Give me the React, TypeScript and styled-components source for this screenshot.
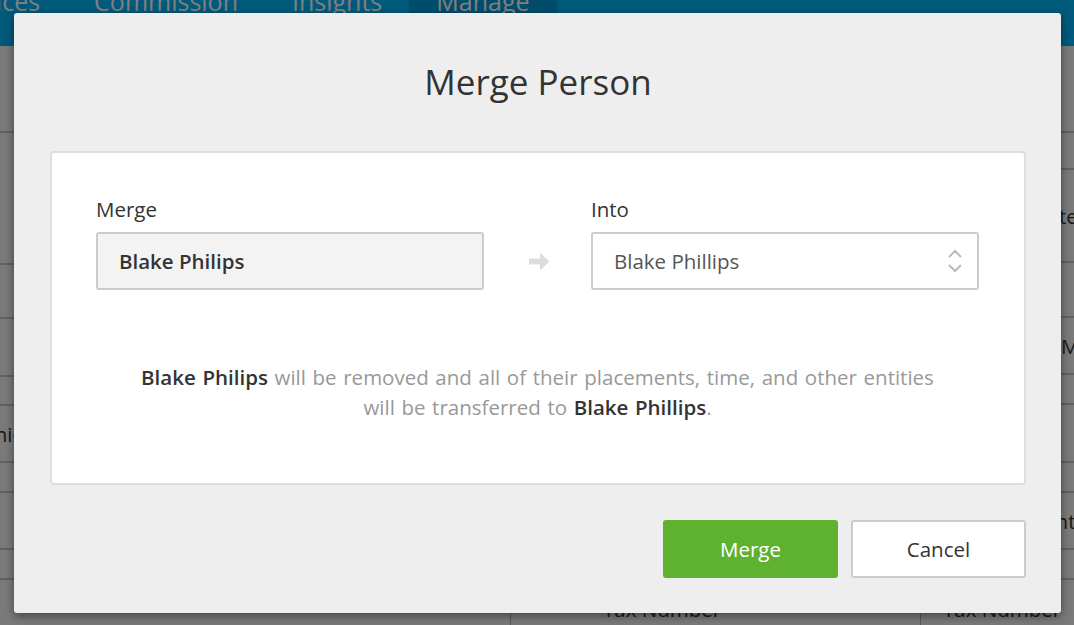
import * as React from 'react';
import styled, { createGlobalStyle } from 'styled-components';

const GlobalStyle = createGlobalStyle`
    html, body {
        margin: 0;
        padding: 0;
        width: 100%;
        height: 100%;
        overflow: hidden;
        font-family: "Open Sans", "Noto Sans", "Liberation Sans", sans-serif;
    }
`;

const Page = styled.div`
    width: 1074px;
    height: 625px;
    position: relative;
    overflow: hidden;
    background: #e8e8e8;
`;

const NavBar = styled.div`
    height: 46px;
    background: #00b4f6;
    display: flex;
    overflow: hidden;
`;

const NavItem = styled.div<{ active?: boolean; first?: boolean }>`
    padding: 0 27px;
    margin-left: ${(p) => (p.first ? '-81px' : '0')};
    background: ${(p) => (p.active ? '#009ad6' : 'transparent')};
    color: #ffffff;
    font-size: 25px;
    line-height: 20px;
    margin-top: -9px;
    height: 56px;
    white-space: nowrap;
`;

const TableGrid = styled.div`
    display: grid;
    grid-template-columns: 510px 410px 1fr;
`;

const Column = styled.div<{ divider?: boolean }>`
    display: flex;
    flex-direction: column;
    border-left: ${(p) => (p.divider ? '1px solid #b0b0b0' : 'none')};
`;

const Cell = styled.div<{ h: number }>`
    height: ${(p) => p.h}px;
    box-sizing: border-box;
    border-bottom: 2px solid #c2c2c2;
    background: #f4f4f4;
    color: #333;
    font-size: 20.5px;
    display: flex;
    align-items: center;
    white-space: nowrap;
    overflow: hidden;
`;

const CellText = styled.span<{ indent?: number }>`
    margin-left: ${(p) => p.indent ?? 22}px;
`;

const Overlay = styled.div`
    position: absolute;
    inset: 0;
    background: rgba(0, 0, 0, 0.5);
`;

const Modal = styled.div`
    position: absolute;
    left: 14px;
    top: 13px;
    width: 1047px;
    height: 600px;
    box-sizing: border-box;
    background: #eeeeee;
    border-radius: 3px;
    box-shadow: 0 3px 10px rgba(0, 0, 0, 0.45);
    padding: 0 35px 35px 36px;
    display: flex;
    flex-direction: column;
`;

const Title = styled.h1`
    margin: 0;
    height: 138px;
    line-height: 138px;
    text-align: center;
    font-size: 35px;
    font-weight: 400;
    color: #333;
`;

const Card = styled.div`
    background: #fff;
    border: 2px solid #dedede;
    border-radius: 4px;
    padding: 42px 45px 61px 44px;
`;

const FieldsRow = styled.div`
    display: grid;
    grid-template-columns: 1fr 107px 1fr;
    align-items: end;
`;

const Field = styled.div`
    display: flex;
    flex-direction: column;
`;

const Label = styled.label`
    font-size: 20.5px;
    line-height: 28px;
    color: #333;
    margin-bottom: 9px;
`;

const Box = styled.div<{ readOnly?: boolean }>`
    height: 58px;
    box-sizing: border-box;
    border: 2px solid #cccccc;
    border-radius: 3px;
    background: ${(p) => (p.readOnly ? '#f3f3f3' : '#ffffff')};
    color: ${(p) => (p.readOnly ? '#333' : '#555')};
    font-weight: ${(p) => (p.readOnly ? 600 : 400)};
    font-size: 20.5px;
    display: flex;
    align-items: center;
    justify-content: space-between;
    padding: 0 14px 0 21px;
`;

const ArrowCell = styled.div`
    height: 58px;
    display: flex;
    align-items: center;
    justify-content: center;
    padding-left: 3px;
`;

const Description = styled.p`
    margin: 72px auto 0;
    max-width: 820px;
    text-align: center;
    font-size: 20.5px;
    line-height: 30px;
    word-spacing: 1.3px;
    color: #999;
`;

const Name = styled.strong`
    color: #333;
    font-weight: 600;
`;

const Footer = styled.div`
    margin-top: auto;
    display: flex;
    justify-content: flex-end;
    gap: 13px;
`;

const Button = styled.button<{ primary?: boolean }>`
    width: 175px;
    height: 58px;
    box-sizing: border-box;
    border-radius: 3px;
    font-family: inherit;
    font-size: 20.5px;
    cursor: pointer;
    border: ${(p) => (p.primary ? 'none' : '2px solid #cccccc')};
    background: ${(p) => (p.primary ? '#5fb230' : '#ffffff')};
    color: ${(p) => (p.primary ? '#ffffff' : '#333333')};
`;

const RightArrow = () => (
    <svg width="21" height="19" viewBox="0 0 21 19">
        <path d="M0 6.5 H11 V0.5 L20.5 9.5 L11 18.5 V12.5 H0 Z" fill="#dddddd" />
    </svg>
);

const UpDown = () => (
    <svg width="16" height="26" viewBox="0 0 16 26">
        <path d="M2 9 L8 3 L14 9 M2 17 L8 23 L14 17" fill="none" stroke="#bbbbbb" strokeWidth="2" />
    </svg>
);

type Row = { h: number; text?: string; indent?: number };

// rows of the page behind the dialog; only thin strips of it show
const leftRows: Row[] = [
    { h: 87 },
    { h: 132 },
    { h: 54 },
    { h: 58 },
    { h: 29 },
    { h: 57, text: 'Communication', indent: -81 },
    { h: 30 },
    { h: 57 },
    { h: 30 },
    { h: 60 },
];

const middleRows: Row[] = leftRows.map((r, i) =>
    i === leftRows.length - 1 ? { h: r.h, text: 'Tax Number', indent: 92 } : { h: r.h }
);

const rightRows: Row[] = [
    { h: 87 },
    { h: 37 },
    { h: 93, text: 'Rate', indent: 114 },
    { h: 55 },
    { h: 57, text: 'Method', indent: 140 },
    { h: 30 },
    { h: 58 },
    { h: 30 },
    { h: 57, text: 'Agent', indent: 99 },
    { h: 30 },
    { h: 60, text: 'Tax Number', indent: 22 },
];

const BackColumn = ({ rows, divider }: { rows: Row[]; divider?: boolean }) => (
    <Column divider={divider}>
        {rows.map((r, i) => (
            <Cell key={i} h={r.h}>
                {r.text && <CellText indent={r.indent}>{r.text}</CellText>}
            </Cell>
        ))}
    </Column>
);

export default function App() {
    return (
        <Page>
            <GlobalStyle />
            <NavBar>
                <NavItem first>Invoices</NavItem>
                <NavItem>Commission</NavItem>
                <NavItem>Insights</NavItem>
                <NavItem active>Manage</NavItem>
            </NavBar>
            <TableGrid>
                <BackColumn rows={leftRows} />
                <BackColumn rows={middleRows} divider />
                <BackColumn rows={rightRows} divider />
            </TableGrid>
            <Overlay />
            <Modal>
                <Title>Merge Person</Title>
                <Card>
                    <FieldsRow>
                        <Field>
                            <Label>Merge</Label>
                            <Box readOnly>Blake Philips</Box>
                        </Field>
                        <ArrowCell>
                            <RightArrow />
                        </ArrowCell>
                        <Field>
                            <Label>Into</Label>
                            <Box>
                                Blake Phillips
                                <UpDown />
                            </Box>
                        </Field>
                    </FieldsRow>
                    <Description>
                        <Name>Blake Philips</Name> will be removed and all of their placements, time, and other entities
                        will be transferred to <Name>Blake Phillips</Name>.
                    </Description>
                </Card>
                <Footer>
                    <Button primary>Merge</Button>
                    <Button>Cancel</Button>
                </Footer>
            </Modal>
        </Page>
    );
}
